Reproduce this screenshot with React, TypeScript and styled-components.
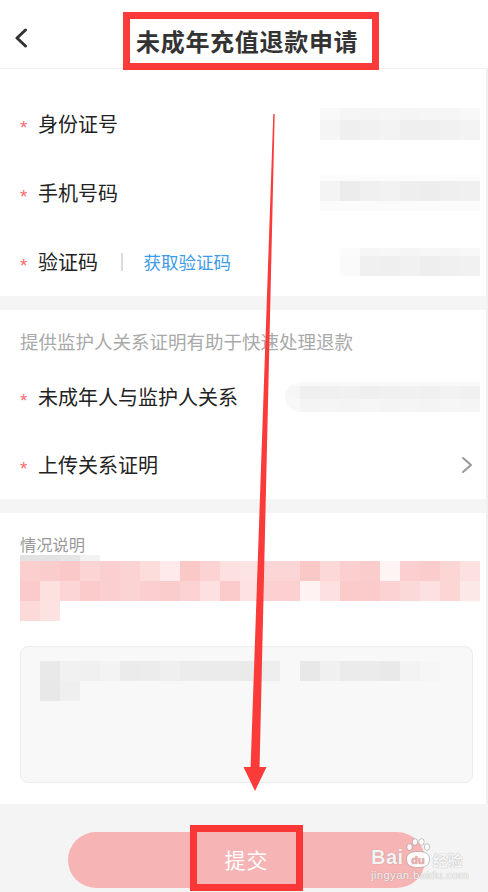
import React from "react";
import styled, { createGlobalStyle } from "styled-components";

const Global = createGlobalStyle`
  html, body { margin: 0; padding: 0; background: #ffffff; }
  body { font-family: "Noto Sans CJK SC", "Noto Sans", sans-serif; color: #333; }
  * { box-sizing: border-box; }
`;

const Page = styled.div`
  position: relative;
  width: 488px;
  height: 892px;
  overflow: hidden;
  background: #ffffff;
  display: flex;
  flex-direction: column;
`;

const Header = styled.header`
  height: 69px;
  flex: none;
  display: flex;
  align-items: flex-start;
  border-bottom: 1px solid #efefef;
  background: #fff;
`;

const BackBtn = styled.div`
  margin-left: 14px;
  margin-top: 28px;
  width: 14px;
  height: 20px;
  display: flex;
`;

const TitleFrame = styled.div`
  position: relative;
  z-index: 1;
  margin-left: 95px;
  margin-top: 12px;
  width: 256px;
  height: 58px;
  border: 7px solid #fb3a3a;
  background: #fff;
  display: flex;
  align-items: center;
  padding-left: 6px;
`;

const Title = styled.h1`
  margin: 0;
  font-size: 24px;
  font-weight: 700;
  letter-spacing: 0.7px;
  color: #333;
  line-height: 1;
`;

const Body = styled.div`
  flex: 1;
  display: flex;
  flex-direction: column;
  border-right: 2px solid #f0f0f0;
`;

const Section = styled.section<{ $pt: number; $pb?: number }>`
  background: #fff;
  padding-top: ${(p) => p.$pt}px;
  padding-bottom: ${(p) => p.$pb ?? 0}px;
  display: flex;
  flex-direction: column;
`;

const Band = styled.div<{ $h: number }>`
  height: ${(p) => p.$h}px;
  background: #f5f5f5;
  flex: none;
`;

const Row = styled.div<{ $h: number }>`
  height: ${(p) => p.$h}px;
  display: flex;
  align-items: center;
  padding: 0 6px 0 20px;
`;

const Star = styled.span`
  width: 18px;
  flex: none;
  color: #f76c6c;
  font-family: "Liberation Sans", sans-serif;
  font-size: 19px;
  line-height: 1;
  padding-top: 7px;
  align-self: center;
`;

const Label = styled.span`
  font-size: 20px;
  color: #222;
  font-weight: 400;
  line-height: 1;
`;

const Divider = styled.span`
  width: 1.5px;
  height: 18px;
  background: #dcdcdc;
  margin: 0 21px 0 23px;
`;

const CodeLink = styled.span`
  font-size: 17.5px;
  color: #3d9be9;
  line-height: 1;
`;

const Hint = styled.div`
  padding: 0 20px;
  height: 22px;
  line-height: 22px;
  font-size: 18.5px;
  color: #a9a9a9;
  margin-bottom: 11px;
`;

const SubLabel = styled.div`
  padding: 0 20px;
  height: 22px;
  line-height: 22px;
  font-size: 16.25px;
  color: #999;
`;

const Mosaic = styled.div<{ $ml?: number; $radius?: string }>`
  display: flex;
  flex-direction: column;
  margin-left: ${(p) => (p.$ml === undefined ? "auto" : `${p.$ml}px`)};
  border-radius: ${(p) => p.$radius ?? "0"};
  overflow: hidden;
`;

const MRow = styled.div<{ $h: number }>`
  display: flex;
  height: ${(p) => p.$h}px;
`;

const Cell = styled.div<{ $c: string; $w?: number }>`
  width: ${(p) => p.$w ?? 20}px;
  flex: none;
  background: ${(p) => p.$c};
`;

type MRowData = { h: number; cells: string[]; first?: number };

const MosaicBlock: React.FC<{ rows: MRowData[]; ml?: number; radius?: string }> = ({
  rows,
  ml,
  radius,
}) => (
  <Mosaic $ml={ml} $radius={radius}>
    {rows.map((r, i) => (
      <MRow key={i} $h={r.h}>
        {r.cells.map((c, j) => (
          <Cell key={j} $c={c} $w={j === 0 && r.first ? r.first : 20} />
        ))}
      </MRow>
    ))}
  </Mosaic>
);

const ChevronRight = styled.div`
  margin-left: auto;
  margin-right: 7px;
  width: 12px;
  height: 18px;
  display: flex;
`;

const DescArea = styled.div`
  padding: 0 0 0 20px;
  display: flex;
  flex-direction: column;
`;

const TextBox = styled.div`
  margin: 25px 13px 0 20px;
  height: 137px;
  background: #f8f8f8;
  border: 1px solid #ececec;
  border-radius: 8px;
  padding: 14px 0 0 19px;
`;

const Footer = styled.footer`
  position: relative;
  height: 89px;
  flex: none;
  background: #f4f4f4;
  padding-top: 28px;
`;

const SubmitButton = styled.button`
  margin-left: 68px;
  width: 357px;
  height: 56px;
  border: none;
  border-radius: 28px;
  background: #f7b4b4;
  display: flex;
  justify-content: center;
  align-items: flex-start;
  padding: 0;
  font-family: inherit;
`;

const Highlight = styled.span`
  margin-top: -7px;
  width: 113px;
  height: 66px;
  border: 7px solid #fb3636;
  display: flex;
  align-items: center;
  justify-content: center;
  color: #fff;
  font-size: 21px;
  letter-spacing: 1px;
  padding-top: 2px;
`;

const Watermark = styled.div`
  position: absolute;
  left: 371px;
  top: 836px;
  display: flex;
  flex-direction: column;
  color: rgba(255, 255, 255, 0.92);
  text-shadow: 0 0 1px rgba(110, 110, 110, 0.7);
  pointer-events: none;
`;

const WmTop = styled.div`
  display: flex;
  align-items: flex-end;
  height: 33px;
`;

const WmBai = styled.span`
  font-family: "Liberation Sans", sans-serif;
  font-weight: 700;
  font-size: 20px;
  line-height: 1;
  padding-bottom: 2px;
  letter-spacing: 0.5px;
`;

const WmJy = styled.span`
  font-size: 15px;
  line-height: 1;
  padding-bottom: 2px;
  font-weight: 700;
  margin-left: 1px;
`;

const WmUrl = styled.span`
  font-family: "Liberation Sans", sans-serif;
  font-size: 11.5px;
  line-height: 1;
  margin-top: 1px;
  letter-spacing: 0.3px;
`;

const Overlay = styled.svg`
  position: absolute;
  left: 0;
  top: 0;
  width: 488px;
  height: 892px;
  pointer-events: none;
`;

const g = (v: string, n: number) => Array(n).fill(v);

const idRows: MRowData[] = [
  { h: 12, cells: ["#f9f9f9", "#f6f6f6", "#f5f5f5", "#f6f6f6", "#f5f5f5", "#f6f6f6", "#f6f6f6", "#f8f8f8"] },
  { h: 20, cells: ["#f5f5f5", "#efefef", "#f1f1f1", "#f3f3f3", "#efefef", "#efefef", "#f1f1f1", "#f3f3f3"] },
];
const phoneRows: MRowData[] = [
  { h: 6, cells: g("#fcfcfc", 8) },
  { h: 20, cells: ["#f4f4f4", "#ececec", "#f0f0f0", "#f2f2f2", "#eeeeee", "#ededed", "#efefef", "#f0f0f0"] },
  { h: 10, cells: g("#fbfbfb", 8) },
];
const codeRows: MRowData[] = [
  { h: 8, cells: ["#fbfbfb", "#f6f6f6", "#f7f7f7", "#f5f5f5", "#f7f7f7", "#f6f6f6", "#f8f8f8"] },
  { h: 20, cells: ["#fafafa", "#f0f0f0", "#efefef", "#f1f1f1", "#eeeeee", "#f0f0f0", "#f1f1f1"] },
];
const relRows: MRowData[] = [
  { h: 4, first: 15, cells: ["#fbfbfb", ...g("#f9f9f9", 9)] },
  { h: 13, first: 15, cells: ["#f6f6f6", "#efefef", "#f0f0f0", "#f1f1f1", "#efefef", "#f0f0f0", "#f1f1f1", "#f0f0f0", "#f2f2f2", "#f1f1f1"] },
  { h: 13, first: 15, cells: ["#f8f8f8", "#f4f4f4", "#f5f5f5", "#f4f4f4", "#f6f6f6", "#f4f4f4", "#f5f5f5", "#f4f4f4", "#f6f6f6", "#f5f5f5"] },
];
const pinkRows: MRowData[] = [
  { h: 6, cells: ["#e2e2e2", "#e2e2e2", "#e5e5e5", "#f2f2f2"] },
  {
    h: 20,
    cells: [
      "#fccfcf", "#fbcccc", "#fac8c8", "#fcd4d4", "#fbcfcf", "#fcd3d3", "#fddcdc", "#feeaea",
      "#fbc8c8", "#fcd2d2", "#fde0e0", "#fde4e4", "#fcd6d6", "#fcd6d6", "#fbc8c8", "#fcd8d8",
      "#fbcfcf", "#fbcccc", "#fef4f4", "#fbcfcf", "#fbcccc", "#fcd5d5", "#fde0e0",
    ],
  },
  {
    h: 20,
    cells: [
      "#fbcbcb", "#fde0e0", "#fcd6d6", "#fbcaca", "#fbcfcf", "#fcd3d3", "#fbcfcf", "#fbcccc",
      "#fcd2d2", "#fde0e0", "#fbcaca", "#fde2e2", "#fcd0d0", "#fcd0d0", "#fef2f2", "#fde0e0",
      "#fbcaca", "#fbcaca", "#fcd2d2", "#fcd9d9", "#fde0e0", "#fcd5d5", "#fde8e8",
    ],
  },
  { h: 20, cells: ["#fcdada", "#fde2e2"] },
];
const textRows: MRowData[] = [
  {
    h: 20,
    cells: [
      "#e9e9e9", "#f1f1f1", "#f0f0f0", "#f3f3f3", "#ebebeb", "#ececec", "#efefef", "#ececec",
      "#ebebeb", "#ebebeb", "#eaeaea", "#eeeeee", "#f8f8f8", "#e8e8e8", "#f0f0f0", "#ebebeb",
      "#ebebeb", "#e9e9e9", "#f3f3f3", "#f6f6f6",
    ],
  },
  { h: 20, cells: ["#e8e8e8", "#efefef"] },
];

export default function App() {
  return (
    <>
      <Global />
      <Page>
        <Header>
          <BackBtn>
            <svg width="14" height="20" viewBox="0 0 14 20">
              <polyline points="11.5,2 3,10 11.5,18" fill="none" stroke="#333" strokeWidth="3" strokeLinecap="round" strokeLinejoin="round" />
            </svg>
          </BackBtn>
          <TitleFrame>
            <Title>未成年充值退款申请</Title>
          </TitleFrame>
        </Header>
        <Body>
          <Section $pt={20}>
            <Row $h={69}>
              <Star>*</Star>
              <Label>身份证号</Label>
              <MosaicBlock rows={idRows} />
            </Row>
            <Row $h={69}>
              <Star>*</Star>
              <Label>手机号码</Label>
              <MosaicBlock rows={phoneRows} />
            </Row>
            <Row $h={69}>
              <Star>*</Star>
              <Label>验证码</Label>
              <Divider />
              <CodeLink>获取验证码</CodeLink>
              <MosaicBlock rows={codeRows} />
            </Row>
          </Section>
          <Band $h={14} />
          <Section $pt={20}>
            <Hint>提供监护人关系证明有助于快速处理退款</Hint>
            <Row $h={68}>
              <Star>*</Star>
              <Label>未成年人与监护人关系</Label>
              <MosaicBlock rows={relRows} radius="15px 0 0 15px" />
            </Row>
            <Row $h={68}>
              <Star>*</Star>
              <Label>上传关系证明</Label>
              <ChevronRight>
                <svg width="12" height="18" viewBox="0 0 12 18">
                  <polyline points="2,2 10,9 2,16" fill="none" stroke="#999" strokeWidth="2" strokeLinecap="round" strokeLinejoin="round" />
                </svg>
              </ChevronRight>
            </Row>
          </Section>
          <Band $h={14} />
          <Section $pt={20} $pb={21}>
            <SubLabel>情况说明</SubLabel>
            <DescArea>
              <MosaicBlock rows={pinkRows} ml={0} />
            </DescArea>
            <TextBox>
              <MosaicBlock rows={textRows} ml={0} />
            </TextBox>
          </Section>
        </Body>
        <Footer>
          <SubmitButton type="button">
            <Highlight>提交</Highlight>
          </SubmitButton>
        </Footer>
        <Watermark>
          <WmTop>
            <WmBai>Bai</WmBai>
            <svg width="28" height="32" viewBox="0 0 28 32" style={{ marginLeft: 0 }}>
              <g fill="rgba(255,255,255,0.92)" stroke="rgba(130,130,130,0.65)" strokeWidth="0.7">
                <ellipse cx="5.5" cy="10" rx="2.7" ry="3.3" />
                <ellipse cx="11" cy="5" rx="2.7" ry="3.3" />
                <ellipse cx="17.5" cy="5" rx="2.7" ry="3.3" />
                <ellipse cx="23" cy="10" rx="2.7" ry="3.3" />
                <path d="M2.5 22 C2.5 16 8 14.5 14 14.5 C20 14.5 25.5 16 25.5 22 C25.5 28.5 21 30.5 14 30.5 C7 30.5 2.5 28.5 2.5 22 Z" />
              </g>
              <text x="14" y="27" textAnchor="middle" fontSize="11" fontWeight="700" fontFamily="Liberation Sans, sans-serif" fill="#f3aaaa">du</text>
            </svg>
            <WmJy>经验</WmJy>
          </WmTop>
          <WmUrl>jingyan.baidu.com</WmUrl>
        </Watermark>
        <Overlay viewBox="0 0 488 892">
          <polygon points="273.3,114 274.7,114 259.5,770 250.5,770" fill="#fb3a3a" />
          <polygon points="243.5,767 266.5,767 255,791" fill="#fb3a3a" />
        </Overlay>
      </Page>
    </>
  );
}
